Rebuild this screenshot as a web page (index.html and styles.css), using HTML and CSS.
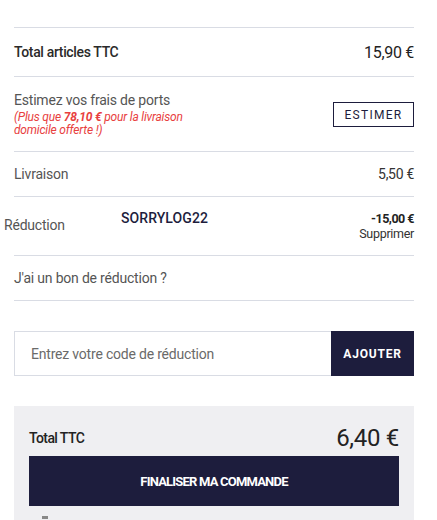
FILE: index.html
```html
<!DOCTYPE html>
<html lang="fr">
<head>
<meta charset="utf-8">
<link rel="stylesheet" href="styles.css">
</head>
<body>
<div class="cart">
  <div class="row row-total">
    <span class="label strong">Total articles TTC</span>
    <span class="value big">15,90 €</span>
  </div>
  <div class="row row-estim">
    <div class="estim-text">
      <div class="label">Estimez vos frais de ports</div>
      <div class="promo">(Plus que <b>78,10 €</b> pour la livraison<br>domicile offerte !)</div>
    </div>
    <button class="btn-outline">ESTIMER</button>
  </div>
  <div class="row row-liv">
    <span class="label">Livraison</span>
    <span class="value">5,50 €</span>
  </div>
  <div class="row row-red">
    <span class="label red-label">Réduction</span>
    <span class="code">SORRYLOG22</span>
    <div class="red-value">
      <div class="amount">-15,00 €</div>
      <div class="remove">Supprimer</div>
    </div>
  </div>
  <div class="row row-bon">
    <span class="label">J'ai un bon de réduction ?</span>
  </div>
  <div class="coupon">
    <input class="coupon-input" type="text" placeholder="Entrez votre code de réduction">
    <button class="btn-dark">AJOUTER</button>
  </div>
  <div class="checkout">
    <div class="total-line">
      <span class="total-label">Total TTC</span>
      <span class="total-value">6,40 €</span>
    </div>
    <button class="btn-final">FINALISER MA COMMANDE</button>
    <div class="after"><span class="mini-icon"></span></div>
  </div>
</div>
</body>
</html>
```

FILE: styles.css
```css
* { box-sizing: border-box; }
html, body { margin: 0; padding: 0; background: #fff; }
body {
  font-family: Roboto, "Liberation Sans", sans-serif;
  color: #333;
  width: 437px;
  height: 520px;
  overflow: hidden;
}
.cart {
  padding: 27px 23px 0 14px;
}
.row {
  display: flex;
  align-items: center;
  justify-content: space-between;
  border-bottom: 1px solid #d9dce4;
}
.row-total {
  border-top: 1px solid #d9dce4;
  height: 50px;
}
.label {
  font-size: 14px;
  color: #555;
  letter-spacing: -0.2px;
}
.label.strong {
  font-weight: 500;
  color: #2a2a2a;
  letter-spacing: -0.35px;
}
.value {
  font-size: 14px;
  color: #333;
  letter-spacing: -0.3px;
}
.value.big {
  font-size: 16px;
  color: #222;
}
.row-estim {
  height: 75px;
  align-items: flex-start;
  padding-top: 15px;
}
.promo {
  color: #e8403e;
  font-style: italic;
  font-size: 12px;
  line-height: 13px;
  margin-top: 3px;
  letter-spacing: -0.2px;
}
.promo b { font-weight: 700; }
.btn-outline {
  margin-top: 10px;
  width: 81px;
  height: 25px;
  border: 1px solid #1d1d3d;
  background: #fff;
  color: #1d1d3d;
  font-family: Roboto, sans-serif;
  font-size: 12px;
  letter-spacing: 1.3px;
  padding: 0;
}
.row-liv { height: 45px; }
.row-red {
  height: 59px;
  align-items: flex-start;
  justify-content: flex-start;
}
.red-label {
  margin-left: -10px;
  margin-top: 20px;
}
.code {
  margin-left: 56px;
  margin-top: 13px;
  font-weight: 500;
  font-size: 14px;
  color: #1d1d3d;
  letter-spacing: 0.1px;
}
.red-value {
  margin-left: auto;
  margin-top: 14px;
  text-align: right;
  line-height: 15px;
}
.amount {
  font-weight: 700;
  font-size: 12.5px;
  color: #222;
  letter-spacing: -0.5px;
}
.remove {
  font-size: 12.5px;
  color: #333;
  letter-spacing: -0.3px;
}
.row-bon { height: 45px; }
.coupon {
  display: flex;
  margin-top: 30px;
  height: 45px;
}
.coupon-input {
  flex: 1;
  height: 45px;
  border: 1px solid #d9dce4;
  border-right: none;
  padding: 0 16px;
  font-family: Roboto, sans-serif;
  font-size: 14px;
  color: #555;
  letter-spacing: -0.2px;
  outline: none;
}
.coupon-input::placeholder { color: #6a6a6a; }
.btn-dark {
  width: 83px;
  height: 45px;
  border: none;
  background: #1d1d3d;
  color: #fff;
  font-family: Roboto, sans-serif;
  font-weight: 700;
  font-size: 12px;
  letter-spacing: 0.8px;
  padding: 0;
}
.checkout {
  margin-top: 30px;
  background: #efeff2;
  padding: 14px 15px 0 15px;
  height: 130px;
}
.total-line {
  display: flex;
  justify-content: space-between;
  align-items: center;
  height: 36px;
}
.total-label {
  font-size: 14px;
  font-weight: 500;
  color: #222;
  letter-spacing: -0.6px;
}
.total-value {
  font-size: 24px;
  color: #222;
  letter-spacing: -0.3px;
}
.btn-final {
  display: block;
  width: 100%;
  height: 50px;
  border: none;
  background: #1d1d3d;
  color: #fff;
  font-family: Roboto, sans-serif;
  font-weight: 700;
  font-size: 13px;
  letter-spacing: -0.8px;
  margin-top: 0;
}
.after {
  padding: 10px 0 0 13px;
}
.mini-icon {
  display: block;
  width: 6px;
  height: 3px;
  background: #888;
}
```
